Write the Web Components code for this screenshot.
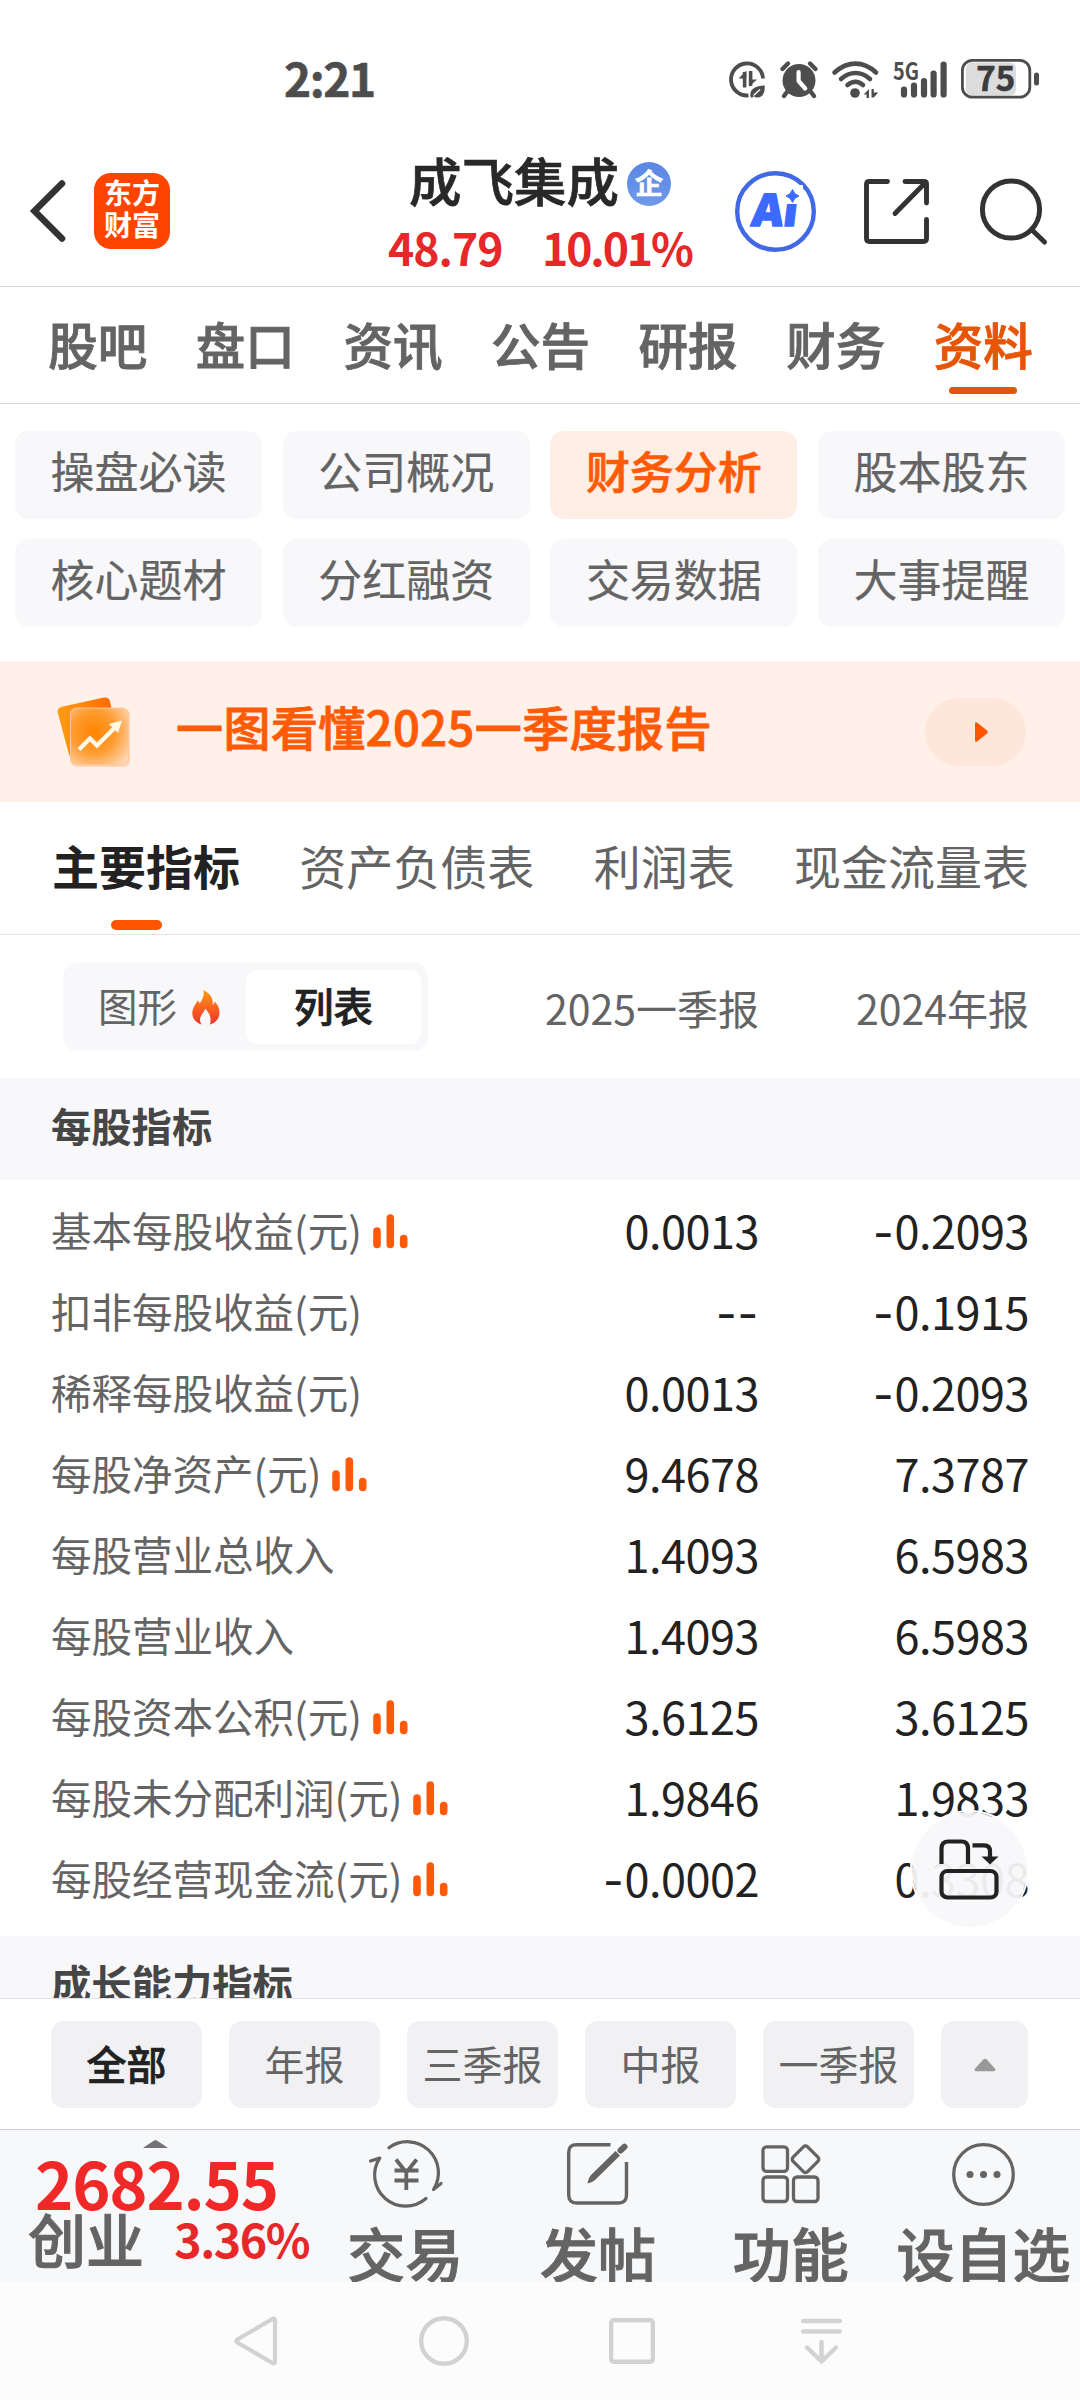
<!DOCTYPE html>
<html lang="zh-CN">
<head>
<meta charset="utf-8">
<title>成飞集成 - 财务分析</title>
<style>
html, body { margin: 0; padding: 0; }
body { width: 1080px; height: 2400px; overflow: hidden; background: #fff; font-family: "Noto Sans CJK SC", "Noto Sans", sans-serif; color: #222; }
</style>
</head>
<body>
<app-screen></app-screen>
<script>
const define = (name, css, html) => customElements.define(name, class extends HTMLElement {
  connectedCallback() {
    if (this.shadowRoot) return;
    const root = this.attachShadow({ mode: 'open' });
    const body = typeof html === 'function' ? html(this) : html;
    root.innerHTML = `<style>*{box-sizing:border-box}:host{display:block;box-sizing:border-box;white-space:nowrap}${css}</style>${body}`;
  }
});

const ICONS = {
  saver: [36, 37, `<path d="M19.5 34.4A16 16 0 1 1 34 17.5" fill="none" stroke="#4d4d4d" stroke-width="3.8"/><path d="M15.6 11v15.5" stroke="#4d4d4d" stroke-width="3.6"/><path d="M9.6 17.6l7.8-8v8z" fill="#4d4d4d"/><path d="M21.6 10v15" stroke="#4d4d4d" stroke-width="3.6"/><path d="M20 18.5h8l-8 7z" fill="#4d4d4d"/><path d="M35.6 24.5c.8 7.5-2.4 12-7 12-1.8 0-2.8-.5-3.800-1.300L22.800 37l-1.400-1.500c-1-7.500 5.200-11 14.200-11z" fill="#4d4d4d"/><path d="M24.500 34.500l6.500-6" stroke="#fff" stroke-width="1.300"/>`],
  alarm: [38, 37, `<circle cx="19" cy="19.500" r="16.500" fill="#4d4d4d"/><path d="M2.500 8L8 2.500M35.500 8L30 2.500M7 31l-3 4M31 31l3 4" stroke="#4d4d4d" stroke-width="4.400" stroke-linecap="round"/><path d="M18.600 11v9l6.600 7.500" fill="none" stroke="#fff" stroke-width="4.200" stroke-linecap="round" stroke-linejoin="round"/>`],
  wifi: [47, 37, `<g fill="none" stroke="#4d4d4d" stroke-width="4.600" stroke-linecap="round"><path d="M2.500 11.500Q12.500 2.600 23.500 2.600T44 11.500"/><path d="M9 18Q15.500 12 23.500 12T38 18"/><path d="M15.500 24Q19.500 20.800 23.500 20.800T31 24"/></g><circle cx="23" cy="32" r="4.800" fill="#4d4d4d"/><path d="M37 28v9h-2.400v-3.500h-3zM39.500 28h2.300v3.500h4.500l-4.500 5h-2.300z" fill="#4d4d4d"/>`],
  signal: [54, 37, `<text x="0" y="18.600" font-size="24" font-weight="700" textLength="26" lengthAdjust="spacingAndGlyphs" font-family="Noto Sans CJK SC" fill="#4d4d4d">5G</text><g stroke="#4d4d4d" stroke-width="6.200" stroke-linecap="round"><path d="M11 28.500v5M21 24.500v9M31 20v13.500M40.600 12.500v21M50.600 3.500v30"/></g>`],
  battery: [78, 40, `<rect x="5" y="3.500" width="50" height="33" rx="6" fill="#dcdcdc"/><rect x="1.400" y="1.400" width="67.400" height="36.800" rx="10" fill="none" stroke="#4d4d4d" stroke-width="2.800"/><rect x="73" y="13.500" width="5" height="13" rx="2.500" fill="#4d4d4d"/><text x="15.300" y="32" font-size="33" font-weight="700" textLength="39" font-family="Noto Sans CJK SC" fill="#3c3c3c" stroke="#3c3c3c" stroke-width=".6">75</text>`],
  back: [36, 62, `<path d="M32 3.500L4.500 31L32 58.500" fill="none" stroke="#333" stroke-width="6.600" stroke-linecap="round"/>`],
  ai: [81, 81, `<circle cx="40.500" cy="40.500" r="38.300" fill="none" stroke="#4169e6" stroke-width="4.400"/><g transform="translate(8.500 0) skewX(-7)"><text x="13.500" y="55" font-family="Noto Sans" font-weight="900" font-size="45" textLength="46" lengthAdjust="spacingAndGlyphs" fill="#3c69ff" stroke="#3c69ff" stroke-width="1.400" stroke-linejoin="round">Ai</text></g><rect x="48" y="14" width="20" height="19" fill="#fff"/><path d="M57.500 18.500Q59 23.500 64 25Q59 26.500 57.500 31.500Q56 26.500 51 25Q56 23.500 57.500 18.500z" fill="#3c69ff" stroke="#3c69ff"/>`],
  share: [65, 65, `<g fill="none" stroke="#333" stroke-width="4.900" stroke-linecap="round" stroke-linejoin="round"><path d="M23.500 2.500H5.500Q2.500 2.500 2.500 5.500V59.500Q2.500 62.500 5.500 62.500H59.500Q62.500 62.500 62.500 59.500V40.500"/><path d="M41 2.500H60Q62.500 2.500 62.500 5V24M61.500 3.500L31 34.500"/></g>`],
  search: [67, 67, `<g fill="none" stroke="#333" stroke-width="5" stroke-linecap="round"><circle cx="31" cy="31.500" r="28.600"/><path d="M51.500 51.500L64.500 64"/></g>`],
  report: [76, 76, `<defs><linearGradient id="b" x1="0" x2="1"><stop offset="0" stop-color="#ff9c14"/><stop offset="1" stop-color="#ff6400"/></linearGradient><radialGradient id="f" cx=".4" cy=".42" r=".74"><stop offset="0" stop-color="#ff8500"/><stop offset=".5" stop-color="#ff9c30"/><stop offset="1" stop-color="#ffd6b4"/></radialGradient></defs><path d="M5 12.800L47 3.600Q52 2.800 53 7.500L62 50Q62 54 58 55L18 64.500Q13 65 12 60.500L.6 18Q0 14 5 12.800z" fill="url(#b)"/><rect x="14" y="15" width="59" height="58" rx="6" fill="#ff9a60" opacity=".3"/><rect x="13.500" y="14" width="58" height="57" rx="6" fill="url(#f)" stroke="#ffc999" stroke-width="1"/><path d="M22 55.500L33 44.500L40 51.500L60 31.500" fill="none" stroke="#fff8e8" stroke-width="4.400"/><path d="M65 26.500l-13 3.500l9 9z" fill="#fff8e8"/>`],
  play: [14, 22, `<path d="M1 2.500Q1 .5 3 1.600L13 9.500Q14.500 11 13 12.500L3 20.400Q1 21.500 1 19.500z" fill="#ff5500"/>`],
  fire: [28, 35, `<defs><linearGradient id="g" x1="0" x2="0" y1="0" y2="1"><stop offset="0" stop-color="#ff9a10"/><stop offset=".5" stop-color="#fb6420"/><stop offset="1" stop-color="#ee3328"/></linearGradient></defs><path d="M11.500 0C19 4 21 8 20.800 15C22 14.500 22.500 13 22.500 11.500C26 15 27.500 18 27.500 23C27.500 29 23 33 18 34.600C20 27 17 23 13.300 18.500C12.500 22 8 25 8 29.500C8 31.500 8.800 33.500 9.800 34.600C4 33 .3 28.500 .3 23.500C.3 16.500 5 13.500 5.300 10.500C6.500 11 7.300 12 7.600 13.500C10.800 9.500 12.300 5.500 11.500 0z" fill="url(#g)"/>`],
  bars: [35, 35, `<path d="M4 17v13.500M17.300 4v26.500M30.700 24.500v6" stroke="#ff5a0a" stroke-width="7.600" stroke-linecap="round"/>`],
  rotate: [61, 61, `<g fill="none" stroke="#222" stroke-width="4.200"><path d="M2.500 25V9.500Q2.500 2.500 9.500 2.500H22.500Q29 2.500 29 9.500V25"/><rect x="2.500" y="32" width="55" height="26.500" rx="6"/><path d="M33.500 6.300H45Q51 6.300 51 12V19"/></g><path d="M42.500 17.500h17L51 25.500z" fill="#222"/>`],
  up: [22, 14, `<path d="M9.500 1.300Q11 0 12.500 1.300L21.300 11Q22 13 20 13.200H2Q0 13 .7 11z" fill="#999"/>`],
  tip: [25, 8, `<path d="M12.500 0Q13.500 0 25 8H0Q11.500 0 12.500 0z" fill="#737377"/>`],
  trade: [73, 66, `<g fill="none" stroke="#646464" stroke-width="3.200" stroke-linecap="round" stroke-linejoin="round"><path d="M20 6.800A31 31 0 0 1 64.500 48.500L72 42.500"/><path d="M57 57.500A31 31 0 0 1 10.800 17L1.500 20"/></g><path d="M27 18.500l10.300 13l10.300-13M37.300 30.500V49M25.500 29.500h24M25.500 39.500h24" fill="none" stroke="#646464" stroke-width="3.800"/>`],
  write: [62, 62, `<path d="M43.500 1.700H9.500Q1.700 1.700 1.700 9.500V52Q1.700 60 9.500 60H51.500Q59.500 60 59.500 52V19" fill="none" stroke="#646464" stroke-width="3.400"/><path d="M20.500 40.500Q21.500 34.500 24 32L48.500 8L53 12.500L28 37Q25.500 39.500 20.500 40.500z" fill="#646464"/><path d="M53.500 7.500L57.500 3.800" stroke="#646464" stroke-width="6" stroke-linecap="round"/>`],
  grid: [60, 60, `<g fill="none" stroke="#646464" stroke-width="3.300"><rect x="2" y="2.800" width="24.500" height="24.500" rx="3.500"/><rect x="2" y="33" width="24.500" height="24.500" rx="3.500"/><rect x="32.500" y="33" width="24.500" height="24.500" rx="3.500"/><rect x="34.300" y="5" width="20.500" height="20.500" rx="3" transform="rotate(45 44.500 15.200)"/></g>`],
  more: [63, 63, `<circle cx="31.500" cy="31.500" r="29.800" fill="none" stroke="#646464" stroke-width="3.300"/><g fill="#646464"><circle cx="18" cy="31.500" r="3.500"/><circle cx="31.500" cy="31.500" r="3.500"/><circle cx="45" cy="31.500" r="3.500"/></g>`],
  navback: [44, 50, `<path d="M38.800 2.800Q41 2 41 4.500V45.500Q41 48 38.800 47.200L3.300 26.500Q1.500 25 3.300 23.500z" fill="none" stroke="#d2d2d2" stroke-width="4.200" stroke-linejoin="round"/>`],
  navhome: [50, 50, `<circle cx="25" cy="25" r="22.800" fill="none" stroke="#d2d2d2" stroke-width="4.400"/>`],
  navrecent: [46, 46, `<rect x="2.200" y="2.200" width="41.600" height="41.600" rx="2.500" fill="none" stroke="#d2d2d2" stroke-width="4.400"/>`],
  navhide: [41, 46, `<path d="M2.200 3h36.600M2.200 13.500h36.600M20.500 24v19.500M6 29.500L20.500 43.500L35 29.500" fill="none" stroke="#d2d2d2" stroke-width="4.400" stroke-linecap="round" stroke-linejoin="round"/>`]
};

define('ui-icon', ':host{display:block;flex:none}svg{display:block}', el => {
  const [w, h, art] = ICONS[el.getAttribute('name')];
  return `<svg width="${w}" height="${h}" viewBox="0 0 ${w} ${h}" style="overflow:visible">${art}</svg>`;
});

define('status-bar', `
  :host{display:flex;align-items:center;height:150px;padding:8px 41px 0 284px;gap:14px}
  time{margin-right:auto;font-size:46px;font-weight:700;line-height:50px;color:#4d4d4d;margin-top:-5px;letter-spacing:-1.400px;-webkit-text-stroke:.6px}
  [name=saver]{margin-right:1px}
`, `<time>2:21</time><ui-icon name="saver"></ui-icon><ui-icon name="alarm"></ui-icon><ui-icon name="wifi"></ui-icon><ui-icon name="signal"></ui-icon><ui-icon name="battery"></ui-icon>`);

define('brand-logo', `
  :host{width:76px;height:76px;border-radius:17px;background:#ff4400;color:#fff;font-size:28px;font-weight:700;line-height:32.500px;padding-top:2.500px;text-align:center}
  span{display:block}
`, `<span>东方</span><span>财富</span>`);

define('stock-title', `
  :host{width:306px;padding-top:4px}
  .name{display:flex;align-items:center;padding-left:22px;gap:8px;height:50px;font-size:52.500px;font-weight:500;line-height:50px;color:#282828;-webkit-text-stroke:.7px}
  .badge{width:44px;height:44px;border-radius:50%;background:linear-gradient(#5a86e4,#7099e8);color:#fff;font-size:28px;font-weight:700;line-height:41px;text-align:center;margin-top:9px}
  .quote{display:flex;margin-top:18px;font-size:44.500px;font-weight:700;line-height:50px;color:#e62828;letter-spacing:-1px}
  .quote span:first-child{width:155px;padding-left:1px}
  .quote span:last-child{letter-spacing:-2.100px}
`, `<div class="name"><span>成飞集成</span><span class="badge">企</span></div><div class="quote"><span>48.79</span><span>10.01%</span></div>`);

define('app-header', `
  :host{display:flex;align-items:center;height:137px;border-bottom:1px solid #d8d8d8;padding-left:30px}
  ui-icon,brand-logo{margin-bottom:14px}
  brand-logo{margin-left:28px}
  stock-title{align-self:flex-start;margin:0 42px 0 217px}
  [name=share]{margin:0 51px 14px 48px}
`, `<ui-icon name="back"></ui-icon><brand-logo></brand-logo><stock-title></stock-title><ui-icon name="ai"></ui-icon><ui-icon name="share"></ui-icon><ui-icon name="search"></ui-icon>`);

define('main-tab', `
  :host{flex:1;display:flex;flex-direction:column;align-items:center;font-size:49.500px;font-weight:500;line-height:60px;color:#646464;padding-top:27px;-webkit-text-stroke:.9px}
  :host([active]){color:#e65505}
  i{width:68px;height:7px;border-radius:4px;margin-top:13px}
  :host([active]) i{background:#e65505}
`, `<span><slot></slot></span><i></i>`);

define('main-tabs', `:host{display:flex;height:117px;border-bottom:1px solid #d8d8d8;padding:0 23px 0 24px}`, `<slot></slot>`);

define('ui-chip', `
  :host{height:88px;border-radius:14px;background:#f8f8fa;color:#646464;font-size:44px;line-height:79px;text-align:center;-webkit-text-stroke:.2px}
  :host([active]){background:#ffeee6;color:#ff5a05;font-weight:500;-webkit-text-stroke:.7px}
`, `<slot></slot>`);

define('chip-grid', `:host{display:grid;grid-template-columns:repeat(4,247px);gap:20px 20.700px;padding:27px 15px 34px}`, `<slot></slot>`);

define('promo-banner', `
  :host{display:flex;align-items:center;height:141px;background:#fff1e9;padding:0 54px 0 57px}
  .text{margin:-12px auto 0 43px;font-size:47px;font-weight:500;line-height:60px;color:#ff5a05;letter-spacing:.450px;-webkit-text-stroke:.9px}
  .go{width:101px;height:68px;border-radius:34px;background:#ffe6da;display:flex;align-items:center;padding-left:49px}
`, `<ui-icon name="report"></ui-icon><span class="text"><slot></slot></span><span class="go"><ui-icon name="play"></ui-icon></span>`);

define('sheet-tab', `
  :host{display:flex;flex-direction:column;font-size:47px;line-height:60px;color:#646464}
  :host([active]){color:#222;font-weight:700}
  i{width:51px;height:10px;border-radius:5px;margin:25px 0 0 59px}
  :host([active]) i{background:#ff5500}
`, `<span><slot></slot></span><i></i>`);

define('sheet-tabs', `:host{display:flex;justify-content:space-between;height:133px;border-bottom:1px solid #e2e2e4;padding:33px 51px 0 52px}`, `<slot></slot>`);

define('view-switch', `
  :host{display:flex;width:365px;height:88px;border-radius:14px;background:#f8f8fa;padding:7px;font-size:39.500px;line-height:69px}
  .off{display:flex;width:176px;padding-left:28px;color:#646464}
  .off ui-icon{margin:20px 0 0 15px}
  .on{flex:1;height:74px;border-radius:11px;background:#fff;color:#222;font-weight:500;text-align:center;-webkit-text-stroke:.7px}
`, `<span class="off">图形<ui-icon name="fire"></ui-icon></span><span class="on">列表</span>`);

define('period-header', `
  :host{display:flex;height:143px;padding:28px 51px 0 63px}
  .p{flex:1;text-align:right;font-size:41px;line-height:88px;color:#646464}
  .p+.p{flex:none;width:270px}
`, `<view-switch></view-switch><span class="p">2025一季报</span><span class="p">2024年报</span>`);

define('section-title', `:host{height:102px;background:#f8f8fa;padding-left:51px;font-size:40.300px;font-weight:700;line-height:93px;color:#464646}`, `<slot></slot>`);

define('metric-row', `
  :host{display:flex;align-items:center;height:81px;padding:0 51px}
  .label{font-size:40.500px;line-height:60px;color:#646464;margin-top:-5px}
  ui-icon{margin:-3px 0 0 11px}
  .v{margin-left:auto;text-align:right;font-size:45px;line-height:60px;color:#222;letter-spacing:-.500px;margin-top:-6px}
  .v+.v{margin-left:0;width:270px}
  b{font-family:Inter;font-weight:400;line-height:0;letter-spacing:.8px}
`, el => {
  const value = t => `<span class="v">${t.replace(/-/g, '<b>-</b>')}</span>`;
  return `<span class="label"><slot></slot></span>${el.hasAttribute('chart') ? '<ui-icon name="bars"></ui-icon>' : ''}${value(el.getAttribute('a'))}${value(el.getAttribute('b'))}`;
});

define('metric-list', `:host{padding:12px 0 15px}`, `<slot></slot>`);

define('rotate-button', `:host{display:flex;align-items:center;justify-content:center;width:115px;height:115px;border-radius:50%;background:rgba(248,248,250,.94);box-shadow:0 0 0 2px #fff}`, `<ui-icon name="rotate"></ui-icon>`);

define('data-pane', `
  :host{height:920px;overflow:hidden;position:relative}
  rotate-button{position:absolute;right:53.500px;bottom:71px}
`, `
  <section-title>每股指标</section-title>
  <metric-list>
    <metric-row chart a="0.0013" b="-0.2093">基本每股收益(元)</metric-row>
    <metric-row a="--" b="-0.1915">扣非每股收益(元)</metric-row>
    <metric-row a="0.0013" b="-0.2093">稀释每股收益(元)</metric-row>
    <metric-row chart a="9.4678" b="7.3787">每股净资产(元)</metric-row>
    <metric-row a="1.4093" b="6.5983">每股营业总收入</metric-row>
    <metric-row a="1.4093" b="6.5983">每股营业收入</metric-row>
    <metric-row chart a="3.6125" b="3.6125">每股资本公积(元)</metric-row>
    <metric-row chart a="1.9846" b="1.9833">每股未分配利润(元)</metric-row>
    <metric-row chart a="-0.0002" b="0.3308">每股经营现金流(元)</metric-row>
  </metric-list>
  <section-title style="line-height:91px">成长能力指标</section-title>
  <rotate-button></rotate-button>`);

define('filter-button', `
  :host{flex:1;display:flex;justify-content:center;height:87px;border-radius:13px;background:#f1f1f3;font-size:40px;line-height:84px;color:#646464}
  :host([active]){font-weight:500;color:#222;-webkit-text-stroke:.7px}
  :host([more]){flex:none;width:87px;align-items:center}
`, `<slot></slot>`);

define('filter-bar', `:host{display:flex;gap:27px;height:131px;border-top:1px solid #e4e4e6;padding:22px 52px 0 51px}`, `<slot></slot>`);

define('index-quote', `
  :host{display:flex;flex-direction:column;width:309px;color:#f02828;font-weight:700}
  ui-icon{margin:10px 0 0 143px}
  .value{font-size:65px;line-height:68px;margin:0 0 0 35px;letter-spacing:-1.200px}
  .line{display:flex;margin-top:-7px;padding-left:28px;line-height:58px}
  .name{font-size:58px;font-weight:500;color:#646464;width:147px;-webkit-text-stroke:1px}
  .pct{font-size:46.500px;color:#e62828;letter-spacing:-1.500px;padding-left:1px}
`, `<ui-icon name="tip"></ui-icon><span class="value">2682.55</span><span class="line"><span class="name">创业</span><span class="pct">3.36%</span></span>`);

define('action-item', `
  :host{display:flex;flex-direction:column;align-items:center;width:192.700px;padding-top:11px;font-size:58px;font-weight:500;line-height:58px;color:#646464;-webkit-text-stroke:1px}
  .pic{height:66px;display:flex;align-items:center;-webkit-text-stroke:0}
  .cap{margin-top:16px}
`, el => `<span class="pic"><ui-icon name="${el.getAttribute('icon')}"></ui-icon></span><span class="cap"><slot></slot></span>`);

define('action-bar', `:host{display:flex;height:153px;border-top:1px solid #d2d2d4;background:#f7f8fa;overflow:hidden}`, `<slot></slot>`);

define('system-nav', `
  :host{display:flex;align-items:center;height:118px;background:#fcfcfc;padding-left:234px}
  [name=navhome]{margin-left:141px}
  [name=navrecent]{margin-left:140px}
  [name=navhide]{margin-left:146px}
`, `<ui-icon name="navback"></ui-icon><ui-icon name="navhome"></ui-icon><ui-icon name="navrecent"></ui-icon><ui-icon name="navhide"></ui-icon>`);

define('app-screen', `:host{width:1080px;height:2400px;background:#fff;overflow:hidden}`, `
  <status-bar></status-bar>
  <app-header></app-header>
  <main-tabs><main-tab>股吧</main-tab><main-tab>盘口</main-tab><main-tab>资讯</main-tab><main-tab>公告</main-tab><main-tab>研报</main-tab><main-tab>财务</main-tab><main-tab active>资料</main-tab></main-tabs>
  <chip-grid><ui-chip>操盘必读</ui-chip><ui-chip>公司概况</ui-chip><ui-chip active>财务分析</ui-chip><ui-chip>股本股东</ui-chip><ui-chip>核心题材</ui-chip><ui-chip>分红融资</ui-chip><ui-chip>交易数据</ui-chip><ui-chip>大事提醒</ui-chip></chip-grid>
  <promo-banner>一图看懂2025一季度报告</promo-banner>
  <sheet-tabs><sheet-tab active>主要指标</sheet-tab><sheet-tab>资产负债表</sheet-tab><sheet-tab>利润表</sheet-tab><sheet-tab>现金流量表</sheet-tab></sheet-tabs>
  <period-header></period-header>
  <data-pane></data-pane>
  <filter-bar><filter-button active>全部</filter-button><filter-button>年报</filter-button><filter-button>三季报</filter-button><filter-button>中报</filter-button><filter-button>一季报</filter-button><filter-button more><ui-icon name="up"></ui-icon></filter-button></filter-bar>
  <action-bar><index-quote></index-quote><action-item icon="trade">交易</action-item><action-item icon="write">发帖</action-item><action-item icon="grid">功能</action-item><action-item icon="more">设自选</action-item></action-bar>
  <system-nav></system-nav>`);
</script>
</body>
</html>
